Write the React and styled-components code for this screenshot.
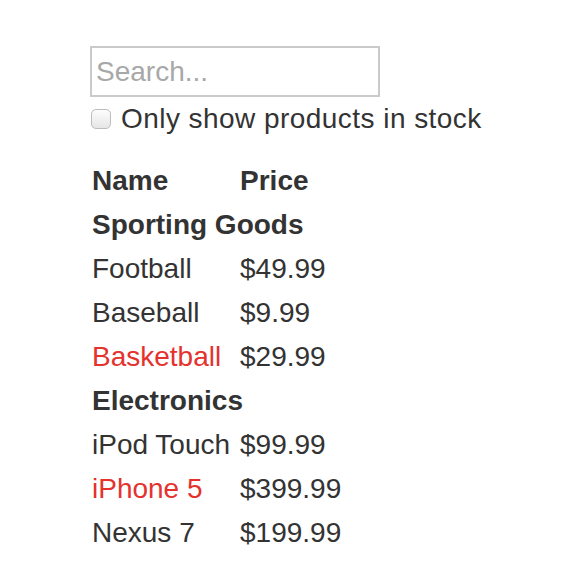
import React, { useState } from 'react';
import styled, { createGlobalStyle } from 'styled-components';

const GlobalStyle = createGlobalStyle`
  body {
    margin: 0;
    background: #fff;
    font-family: "Liberation Sans", Arial, Helvetica, sans-serif;
    color: #333;
  }
`;

const Page = styled.div`
  padding: 46px 0 0 90px;
`;

const SearchInput = styled.input`
  display: block;
  box-sizing: border-box;
  width: 290px;
  height: 51px;
  margin: 0;
  padding: 0 4px;
  border: 2px solid #cacaca;
  border-radius: 0;
  outline: none;
  font-family: inherit;
  font-size: 28px;
  color: #333;
  &::placeholder {
    color: #a8a8a8;
  }
`;

const StockLabel = styled.label`
  display: flex;
  align-items: center;
  gap: 10px;
  margin-top: 6px;
  font-size: 28px;
  letter-spacing: 0.45px;
  line-height: 32px;
`;

const Checkbox = styled.input`
  appearance: none;
  box-sizing: border-box;
  width: 20px;
  height: 20px;
  margin: 0 0 0 1px;
  border: 1px solid #bdbdbd;
  border-radius: 5px;
  background: linear-gradient(#fdfdfd, #e6e6e6);
  &:checked {
    background: linear-gradient(#6aa8f0, #2f7fe0);
    border-color: #2f6fc0;
  }
`;

const Table = styled.table`
  margin: 22px 0 0 -4px;
  border-spacing: 4px;
  font-size: 28px;
  color: #333;
`;

const HeadCell = styled.th`
  padding: 2px 4px 2px 2px;
  text-align: left;
  font-weight: bold;
  line-height: 36px;
`;

const Cell = styled.td`
  padding: 2px 4px 2px 2px;
  line-height: 36px;
  white-space: nowrap;
  color: ${(p) => (p.$out ? '#e5322d' : '#333')};
`;

const PRODUCTS = [
  { category: 'Sporting Goods', price: '$49.99', stocked: true, name: 'Football' },
  { category: 'Sporting Goods', price: '$9.99', stocked: true, name: 'Baseball' },
  { category: 'Sporting Goods', price: '$29.99', stocked: false, name: 'Basketball' },
  { category: 'Electronics', price: '$99.99', stocked: true, name: 'iPod Touch' },
  { category: 'Electronics', price: '$399.99', stocked: false, name: 'iPhone 5' },
  { category: 'Electronics', price: '$199.99', stocked: true, name: 'Nexus 7' },
];

const ProductTable = ({ products, filterText, inStockOnly }) => {
  const rows = [];
  let lastCategory = null;

  products.forEach((product) => {
    if (!product.name.toLowerCase().includes(filterText.toLowerCase())) return;
    if (inStockOnly && !product.stocked) return;
    if (product.category !== lastCategory) {
      rows.push(
        <tr key={product.category}>
          <HeadCell colSpan="2">{product.category}</HeadCell>
        </tr>
      );
    }
    rows.push(
      <tr key={product.name}>
        <Cell $out={!product.stocked}>{product.name}</Cell>
        <Cell>{product.price}</Cell>
      </tr>
    );
    lastCategory = product.category;
  });

  return (
    <Table>
      <thead>
        <tr>
          <HeadCell>Name</HeadCell>
          <HeadCell>Price</HeadCell>
        </tr>
      </thead>
      <tbody>{rows}</tbody>
    </Table>
  );
};

export default function App() {
  const [filterText, setFilterText] = useState('');
  const [inStockOnly, setInStockOnly] = useState(false);

  return (
    <Page>
      <GlobalStyle />
      <form>
        <SearchInput
          type="text"
          placeholder="Search..."
          value={filterText}
          onChange={(e) => setFilterText(e.target.value)}
        />
        <StockLabel>
          <Checkbox
            type="checkbox"
            checked={inStockOnly}
            onChange={(e) => setInStockOnly(e.target.checked)}
          />
          Only show products in stock
        </StockLabel>
      </form>
      <ProductTable products={PRODUCTS} filterText={filterText} inStockOnly={inStockOnly} />
    </Page>
  );
}
